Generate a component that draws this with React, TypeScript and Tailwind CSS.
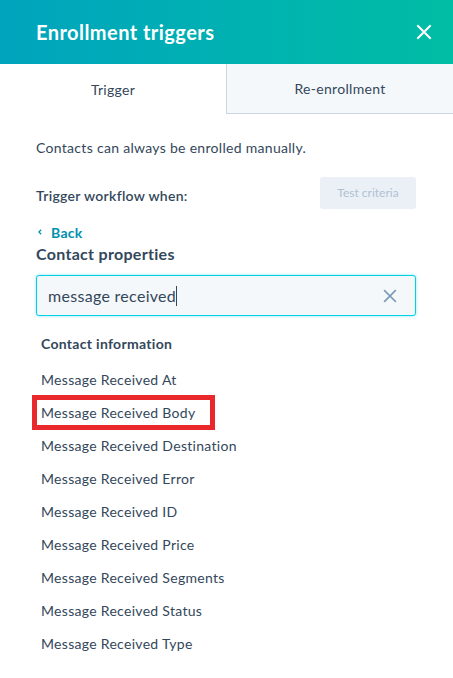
import React from 'react'

const items = [
  'Message Received At',
  'Message Received Body',
  'Message Received Destination',
  'Message Received Error',
  'Message Received ID',
  'Message Received Price',
  'Message Received Segments',
  'Message Received Status',
  'Message Received Type',
]

const XIcon = ({ className = '' }: { className?: string }) => (
  <svg viewBox="0 0 16 16" className={className} fill="none" stroke="currentColor" strokeWidth={2} strokeLinecap="square">
    <path d="M2 2 L14 14 M14 2 L2 14" />
  </svg>
)

export default function App() {
  return (
    <div className="w-[453px] h-[678px] bg-white overflow-hidden font-['Lato',sans-serif] text-[#33475b] tracking-[0.3px]">
      {/* Header */}
      <div className="h-[64px] flex items-center justify-between pl-[36px] pr-[21px] bg-gradient-to-r from-[#00a4bd] to-[#00bda5]">
        <h1 className="text-white text-[20px] font-bold tracking-[0.45px]">Enrollment triggers</h1>
        <XIcon className="w-[16px] h-[16px] text-white" />
      </div>

      {/* Tabs */}
      <div className="flex h-[50px]">
        <div className="w-[226px] flex items-center justify-center text-[14px]">Trigger</div>
        <div className="flex-1 flex items-center justify-center text-[14px] bg-[#f5f8fa] border-l border-b border-[#cbd6e2]">
          Re-enrollment
        </div>
      </div>

      {/* Body */}
      <div className="pl-[36px] pr-[37px]">
        <p className="mt-[24px] text-[14px] leading-[20px]">Contacts can always be enrolled manually.</p>

        <div className="mt-[19px] flex items-start justify-between">
          <span className="mt-[9px] text-[14px] leading-[20px] font-semibold">Trigger workflow when:</span>
          <button className="w-[96px] h-[32px] rounded-[3px] bg-[#eaf0f6] text-[#b0c1d4] text-[12px] tracking-normal">Test criteria</button>
        </div>

        <div className="mt-[13px] flex items-center h-[20px] text-[#0091ae] text-[14px] font-bold">
          <svg viewBox="0 0 8 8" className="w-[6px] h-[6px] ml-[1px]" fill="none" stroke="currentColor" strokeWidth={1.6}>
            <path d="M5.5 1 L2.5 4 L5.5 7" />
          </svg>
          <span className="ml-[8px]">Back</span>
        </div>

        <h2 className="mt-[1px] text-[16px] leading-[22px] font-bold">Contact properties</h2>

        <div className="mt-[10px] h-[41px] rounded-[3px] border-[1.5px] border-[#00d0e4] bg-[#f5f8fa] flex items-center pl-[11px] pr-[18px] shadow-[0_0_3px_rgba(0,208,228,0.5)]">
          <span className="text-[16px] flex-1 flex items-center">
            message received
            <span className="inline-block w-[1px] h-[20px] bg-[#33475b]" />
          </span>
          <XIcon className="w-[14px] h-[14px] text-[#7c98b6]" />
        </div>

        <div className="mt-[18px] pl-[5px] text-[14px] leading-[20px] font-bold">Contact information</div>

        <ul className="mt-[9px]">
          {items.map((item, i) => (
            <li key={item} className="relative h-[33px] flex items-center pl-[5px] text-[14px]">
              {item}
              {i === 1 && (
                <span className="absolute left-[-4px] top-[-1px] w-[183px] h-[35px] border-[5px] border-[#e8282b]" />
              )}
            </li>
          ))}
        </ul>
      </div>
    </div>
  )
}
